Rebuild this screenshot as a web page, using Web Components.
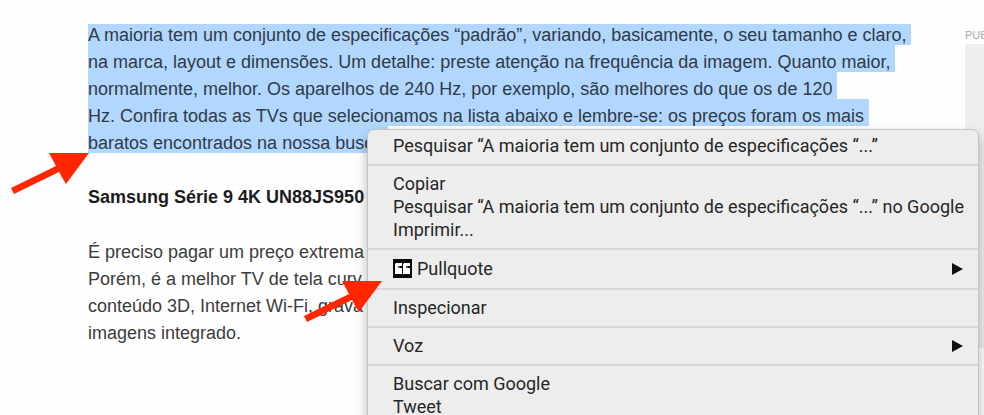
<!DOCTYPE html>
<html lang="pt-BR">
<head>
  <meta charset="utf-8">
  <title>TVs</title>
  <style>
    body {
      margin: 0;
      background: #fefefe;
    }
  </style>
</head>
<body>
  <article-page>
    <article-text></article-text>
    <ad-slot slot="aside">PUBLICIDADE</ad-slot>
    <context-menu slot="overlay">
      <menu-item>Pesquisar “A maioria tem um conjunto de especificações “...”</menu-item>
      <menu-line></menu-line>
      <menu-item>Copiar</menu-item>
      <menu-item>Pesquisar “A maioria tem um conjunto de especificações “...” no Google</menu-item>
      <menu-item>Imprimir...</menu-item>
      <menu-line></menu-line>
      <menu-item submenu>
        <svg slot="icon" width="19" height="19" viewBox="0 0 19 19" aria-hidden="true">
          <rect width="19" height="19" fill="#0b0b0b"/>
          <path d="M2 5L3 4H9V7H6V9H9V15H2ZM10 5L11 4H17V7H14V9H17V15H10Z" fill="#fff"/>
          <path d="M5 7H7V9H5ZM13 7H15V9H13Z" fill="#555"/>
        </svg>
        Pullquote
      </menu-item>
      <menu-line></menu-line>
      <menu-item>Inspecionar</menu-item>
      <menu-line></menu-line>
      <menu-item submenu>Voz</menu-item>
      <menu-line></menu-line>
      <menu-item>Buscar com Google</menu-item>
      <menu-item>Tweet</menu-item>
    </context-menu>
    <red-arrow slot="overlay" style="left: 10px; top: 152px"></red-arrow>
    <red-arrow slot="overlay" style="left: 303px; top: 280px"></red-arrow>
  </article-page>

  <script>
    class ArticlePage extends HTMLElement {
      constructor() {
        super();
        this.attachShadow({ mode: 'open' });
        this.shadowRoot.innerHTML = `
          <style>
            :host {
              display: block;
              position: relative;
              min-height: 100vh;
              overflow: hidden;
            }
            .columns {
              display: grid;
              grid-template-columns: minmax(0, 1fr) 19px;
              padding: 22px 0 0 88px;
            }
          </style>
          <div class="columns">
            <main><slot></slot></main>
            <aside><slot name="aside"></slot></aside>
          </div>
          <slot name="overlay"></slot>
        `;
      }
    }

    class ArticleText extends HTMLElement {
      constructor() {
        super();
        this.attachShadow({ mode: 'open' });
        this.shadowRoot.innerHTML = `
          <style>
            :host {
              display: block;
              font: 18px/27px "Liberation Sans", Arial, sans-serif;
              color: #3c3c3c;
              white-space: nowrap;
            }
            p, h2 {
              margin: 0 0 28px;
            }
            h2 {
              font-size: 18px;
              line-height: 27px;
              color: #1c1c1c;
            }
            /* the first line has no gap to fill above it */
            .selected {
              margin-bottom: 27px;
              clip-path: inset(2px 0 0);
            }
            mark {
              padding: 7px 5px 0 0;
              background: #b2d7ff;
              color: #2f3a47;
              -webkit-box-decoration-break: clone;
              box-decoration-break: clone;
            }
          </style>
          <p class="selected"><mark>A maioria tem um conjunto de especificações “padrão”, variando, basicamente, o seu tamanho e claro,<br>na marca, layout e dimensões. Um detalhe: preste atenção na frequência da imagem. Quanto maior,<br>normalmente, melhor. Os aparelhos de 240 Hz, por exemplo, são melhores do que os de 120<br>Hz. Confira todas as TVs que selecionamos na lista abaixo e lembre-se: os preços foram os mais<br>baratos encontrados na nossa busca</mark></p>
          <h2>Samsung Série 9 4K UN88JS950</h2>
          <p>É preciso pagar um preço extrema<br>Porém, é a melhor TV de tela curv<br>conteúdo 3D, Internet Wi-Fi, grava<br>imagens integrado.</p>
        `;
      }
    }

    class AdSlot extends HTMLElement {
      constructor() {
        super();
        this.attachShadow({ mode: 'open' });
        this.shadowRoot.innerHTML = `
          <style>
            :host {
              display: block;
              overflow: hidden;
              padding-top: 4px;
              font: 11px/18px "Liberation Sans", Arial, sans-serif;
              color: #aaa;
            }
            .box {
              height: 304px;
              background: #eee;
            }
          </style>
          <slot></slot>
          <div class="box"></div>
        `;
      }
    }

    class ContextMenu extends HTMLElement {
      constructor() {
        super();
        this.attachShadow({ mode: 'open' });
        this.shadowRoot.innerHTML = `
          <style>
            :host {
              position: absolute;
              top: 129px;
              left: 367px;
              right: 5px;
              box-sizing: border-box;
              padding: 4px 0 20px;
              border: 1px solid #c4c4c4;
              border-radius: 7px;
              background: #ededed;
              box-shadow: 0 6px 12px rgba(0, 0, 0, 0.28);
            }
          </style>
          <div role="menu"><slot></slot></div>
        `;
      }
    }

    class MenuItem extends HTMLElement {
      constructor() {
        super();
        this.attachShadow({ mode: 'open' });
        this.shadowRoot.innerHTML = `
          <style>
            :host {
              display: block;
            }
            button {
              display: flex;
              align-items: center;
              gap: 5px;
              width: 100%;
              min-height: 23px;
              padding: 0 15px 0 25px;
              border: 0;
              background: none;
              font: 18px/23px Roboto, "Liberation Sans", sans-serif;
              color: #262626;
              text-align: left;
              white-space: nowrap;
            }
            ::slotted(svg) {
              margin: 3px 0;
            }
            .arrow {
              display: none;
              margin-left: auto;
            }
            :host([submenu]) .arrow {
              display: block;
            }
          </style>
          <button type="button" role="menuitem">
            <slot name="icon"></slot>
            <span><slot></slot></span>
            <svg class="arrow" width="11" height="12" viewBox="0 0 11 12" aria-hidden="true">
              <path d="M0 0L11 6L0 12Z" fill="#111"/>
            </svg>
          </button>
        `;
      }
    }

    class MenuLine extends HTMLElement {
      constructor() {
        super();
        this.attachShadow({ mode: 'open' });
        this.shadowRoot.innerHTML = `
          <style>
            :host {
              display: block;
              padding: 7px 0 6px;
            }
            hr {
              height: 2px;
              margin: 0;
              border: 0;
              background: #d7d7d7;
            }
          </style>
          <hr>
        `;
      }
    }

    class RedArrow extends HTMLElement {
      constructor() {
        super();
        this.attachShadow({ mode: 'open' });
        this.shadowRoot.innerHTML = `
          <style>
            :host {
              position: absolute;
            }
            svg {
              display: block;
            }
          </style>
          <svg width="80" height="44" viewBox="0 0 80 44" aria-hidden="true">
            <path d="M1 36L46 14L39 1H79L56 32L49 20L4 42Z" fill="#ff2600"/>
          </svg>
        `;
      }
    }

    customElements.define('article-page', ArticlePage);
    customElements.define('article-text', ArticleText);
    customElements.define('ad-slot', AdSlot);
    customElements.define('context-menu', ContextMenu);
    customElements.define('menu-item', MenuItem);
    customElements.define('menu-line', MenuLine);
    customElements.define('red-arrow', RedArrow);
  </script>
</body>
</html>
